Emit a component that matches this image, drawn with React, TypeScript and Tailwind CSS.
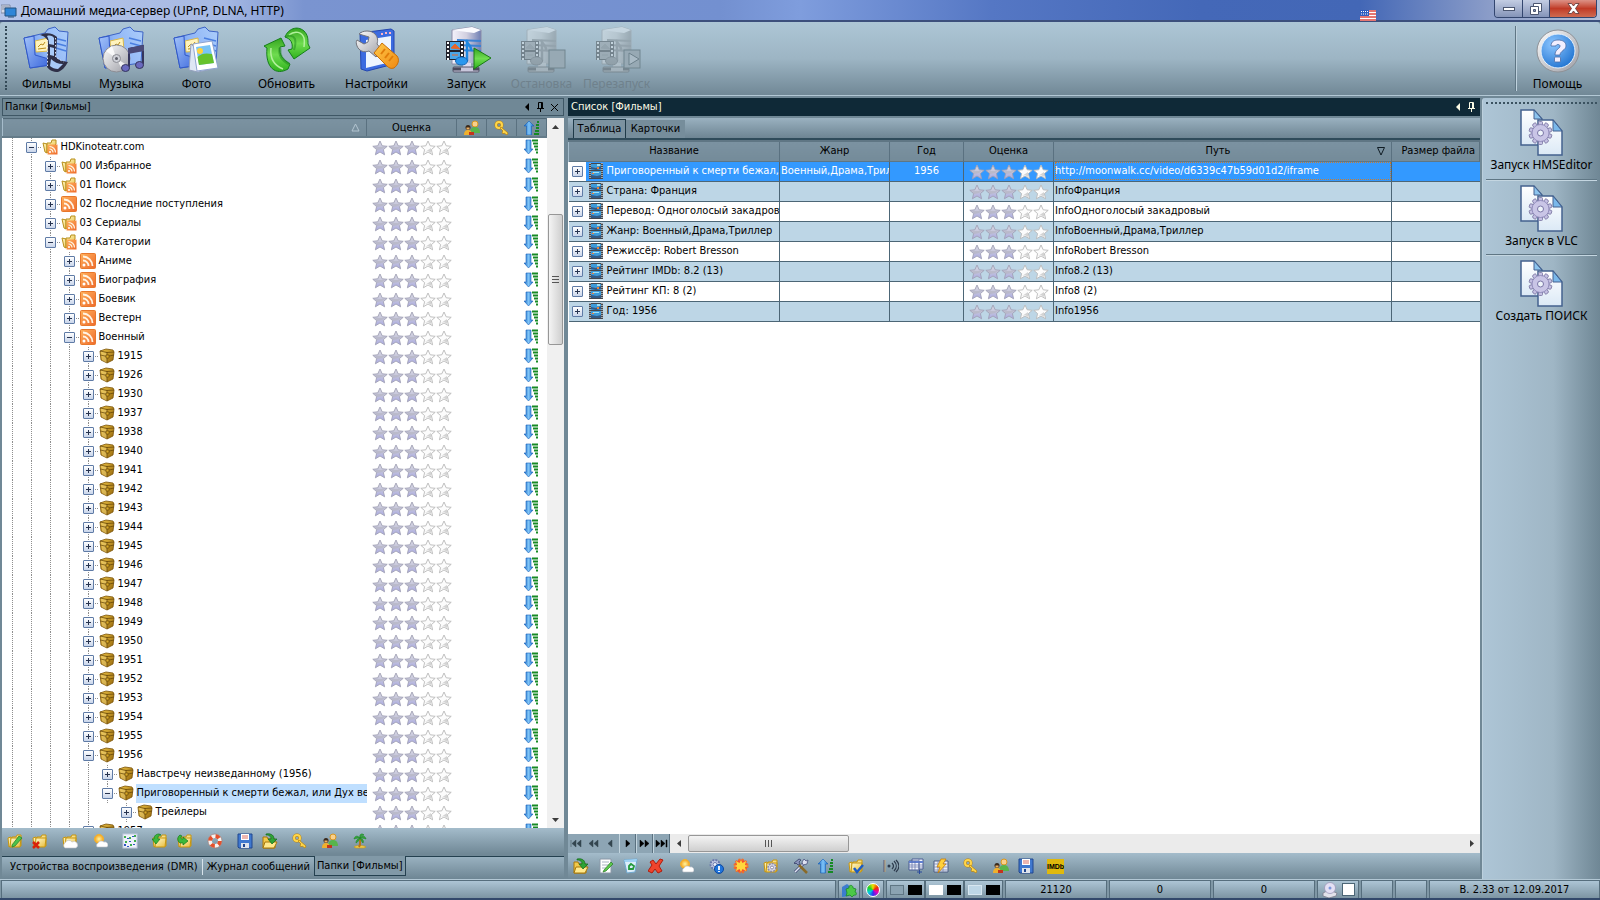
import type { ReactNode } from "react";

const uiFont = "font-['DejaVu_Sans_Condensed','Liberation_Sans',sans-serif]";
const captionFont = "font-['Noto_Sans','Open_Sans',sans-serif]";

/* ---------- shared gradients ---------- */

function Gradients() {
  return (
    <svg width="0" height="0" className="absolute" aria-hidden="true">
      <defs>
        <linearGradient id="folderBody" x1="0" y1="0.6" x2="1" y2="0.2">
          <stop offset="0" stopColor="#4f7fe6" />
          <stop offset="0.4" stopColor="#8fb5f6" />
          <stop offset="1" stopColor="#a9cbfa" />
        </linearGradient>
        <linearGradient id="folderFlap" x1="0" y1="0" x2="1" y2="1">
          <stop offset="0" stopColor="#a4c4fa" />
          <stop offset="1" stopColor="#3a66dc" />
        </linearGradient>
        <linearGradient id="green" x1="0" y1="0" x2="0" y2="1">
          <stop offset="0" stopColor="#35a51f" />
          <stop offset="0.5" stopColor="#6fdc50" />
          <stop offset="1" stopColor="#2fb21c" />
        </linearGradient>
        <linearGradient id="steel" x1="0" y1="0" x2="1" y2="1">
          <stop offset="0" stopColor="#ffffff" />
          <stop offset="1" stopColor="#9a9ba3" />
        </linearGradient>
        <linearGradient id="orange" x1="0" y1="0" x2="1" y2="1">
          <stop offset="0" stopColor="#ffc94a" />
          <stop offset="1" stopColor="#f08a12" />
        </linearGradient>
        <linearGradient id="rss" x1="0" y1="0" x2="1" y2="1">
          <stop offset="0" stopColor="#ffb25c" />
          <stop offset="1" stopColor="#ee6a2c" />
        </linearGradient>
        <linearGradient id="yellow" x1="0" y1="0" x2="1" y2="1">
          <stop offset="0" stopColor="#fffbd0" />
          <stop offset="1" stopColor="#e8bc3a" />
        </linearGradient>
        <linearGradient id="box" x1="0" y1="0" x2="1" y2="1">
          <stop offset="0" stopColor="#ecc142" />
          <stop offset="1" stopColor="#94660a" />
        </linearGradient>
        <linearGradient id="starOn" x1="0" y1="0" x2="0" y2="1">
          <stop offset="0" stopColor="#dcdce6" />
          <stop offset="0.5" stopColor="#c4c4da" />
          <stop offset="1" stopColor="#a9a9e6" />
        </linearGradient>
        <linearGradient id="blueArrow" x1="0" y1="0" x2="1" y2="0">
          <stop offset="0" stopColor="#1767c4" />
          <stop offset="0.5" stopColor="#7fc4f7" />
          <stop offset="1" stopColor="#1a6fce" />
        </linearGradient>
        <linearGradient id="page" x1="0" y1="0" x2="0" y2="1">
          <stop offset="0" stopColor="#ffffff" />
          <stop offset="1" stopColor="#dbe9f6" />
        </linearGradient>
        <linearGradient id="server" x1="0" y1="0" x2="1" y2="0">
          <stop offset="0" stopColor="#f4f2fb" />
          <stop offset="0.5" stopColor="#d2d0e0" />
          <stop offset="1" stopColor="#6f7fb4" />
        </linearGradient>
        <radialGradient id="help" cx="0.35" cy="0.3" r="0.8">
          <stop offset="0" stopColor="#8cc6ff" />
          <stop offset="1" stopColor="#1c70cf" />
        </radialGradient>
        <radialGradient id="sun">
          <stop offset="0" stopColor="#fff6a0" />
          <stop offset="1" stopColor="#f5a01a" />
        </radialGradient>
      </defs>
    </svg>
  );
}

/* ---------- large toolbar icons ---------- */

function Large({ children }: { children: ReactNode }) {
  return (
    <svg viewBox="0 0 48 48" className="size-12 shrink-0" aria-hidden="true">
      {children}
    </svg>
  );
}

function BlueFolder() {
  return (
    <>
      <path d="M1 12l21-5 3-4 7-2 4 4 9 1-2 31-36 5z" fill="url(#folderBody)" stroke="#3d63c4" strokeLinejoin="round" />
      <path d="M31 12l12 3M32 17l11 3M33 22l10 3" stroke="#4a7fe0" strokeWidth="1.5" />
      <path d="M12 15l13-3 1 13-13 1z" fill="#fff3bd" stroke="#d9b84b" />
      <path d="M15 21l3-3 2 1 2-3M15 23l8-1" stroke="#b98d1c" fill="none" />
      <path d="M1 12l10-2 1 19 14 4v6L7 42z" fill="url(#folderFlap)" stroke="#3158c8" strokeLinejoin="round" />
    </>
  );
}

function FilmsIcon() {
  return (
    <Large>
      <BlueFolder />
      <path d="M17 9c6-3 13-2 17 2l-1 20c3 4 7 4 12 5-3 5-5 8-10 10-5 0-9-2-11-5l1-25c-1-4-4-6-8-7z" fill="#2f3048" />
      <path d="M24 10c3-1 6 0 7 2v7l-5-1c0-4-1-6-2-8zM27 21l4 1v8l-4-1zM28 33c3 3 7 5 12 5l-5 5c-3 0-6-1-8-3z" fill="#a9caf8" />
      <path d="M24.500 14v27M32.500 12v19l8 5" stroke="#e8eefc" strokeWidth="0.900" strokeDasharray="1.500 2" fill="none" />
    </Large>
  );
}

function MusicIcon() {
  return (
    <Large>
      <BlueFolder />
      <circle cx="18.500" cy="32.500" r="13.500" fill="url(#steel)" stroke="#8c8d94" />
      <path d="M18.500 32.500L8 25l6-5zM18.500 32.500l11 7-5 5z" fill="#fff" opacity="0.8" />
      <circle cx="18.500" cy="32.500" r="4" fill="#cfd1d8" stroke="#8c8d94" />
      <circle cx="18.500" cy="32.500" r="1.500" fill="#5e606a" />
      <path d="M31 41V23l14-3v18" stroke="#35355c" strokeWidth="2" fill="none" />
      <path d="M30 22l16-3v6l-16 3z" fill="#4a4a78" />
      <ellipse cx="27.500" cy="42" rx="4" ry="3.500" fill="#6a6abf" stroke="#34345c" />
      <ellipse cx="41.500" cy="39" rx="4" ry="3.500" fill="#6a6abf" stroke="#34345c" />
    </Large>
  );
}

function PhotoIcon() {
  return (
    <Large>
      <BlueFolder />
      <path d="M18 18l-2 26 9 2 20-4z" fill="#dfe7f4" stroke="#93a0bd" />
      <path d="M20 18l19-3 6 27-21 3z" fill="#fff" stroke="#8ea4cf" strokeLinejoin="round" />
      <path d="M23 21l14-2 4 18-15 2z" fill="#79c4f5" />
      <path d="M24.500 31c4-4 9-4 14.500-3l2 9-15 2z" fill="#66c22c" />
      <circle cx="27" cy="25" r="3" fill="#ffd23a" />
    </Large>
  );
}

function RefreshIcon() {
  return (
    <Large>
      <path d="M1 20l17-8 4 8-5 1c-1 8 2 12 10 17l-2 5C13 50 2 42 4 22z" fill="url(#green)" stroke="#15801a" strokeLinejoin="round" />
      <path d="M8 22c-1 9 2 17 12 21" stroke="#b2f19c" strokeWidth="1.500" fill="none" />
      <path d="M17 22c-1 8 2 12 9 16" stroke="#1d8a1c" strokeWidth="3" fill="none" opacity="0.5" />
      <path d="M22 11C25 3 34-1 41 5c4 4 4 8 4 13l2 4-16 11-6-9 4-1c1-6-1-10-7-12z" fill="url(#green)" stroke="#15801a" strokeLinejoin="round" />
      <path d="M26 9c6-5 13-3 15 3 1 4 0 7 0 9" stroke="#b2f19c" strokeWidth="1.500" fill="none" />
      <path d="M22 11c4-2 8-2 10 2 1 4 0 8-1 11" stroke="#1d8a1c" strokeWidth="2" fill="none" opacity="0.5" />
    </Large>
  );
}

function SettingsIcon() {
  return (
    <Large>
      <path d="M7 7l31-4 3 2v33l-27 7-6-2z" fill="#3c6be0" stroke="#2447b0" />
      <path d="M13 14l25-4v26l-25 6z" fill="#eef5ff" />
      <path d="M28 8h2M32 7h2M36 7h2" stroke="#ffb4c4" strokeWidth="2" />
      <path
        d="M6 8c4-4 12-4 16 0 3 3 3 7 2 10l5 6-6 7-7-6c-5 2-10 0-12-5-1-3-1-4 0-6l7 4 4-2 1-5z"
        fill="url(#steel)"
        stroke="#73747c"
      />
      <path d="M21 27l8-10 15 13c3 4 1 9-3 12-3 1-5 0-7-2z" fill="url(#orange)" stroke="#c86e08" strokeLinejoin="round" />
      <path d="M28 28l4-5M32 32l4-5M36 35l4-5" stroke="#e07c0a" strokeWidth="2" />
    </Large>
  );
}

function ServerBody() {
  return (
    <>
      <path d="M9 4l20-3 9 3v34H9z" fill="url(#server)" stroke="#8c8ca8" />
      <path d="M9 4l20-3 9 3-7 3z" fill="#fafafe" />
      <path d="M14 14l24 1M14 19l24 1M14 24l24 1" stroke="#3c82d4" strokeWidth="2" />
      <path d="M20 37h8v4h-8z" fill="#dcdaf0" />
      <rect x="10" y="41" width="26" height="5" rx="1" fill="#c9c7dc" stroke="#55556a" />
      <path d="M10 43h8M30 43h6" stroke="#4a4a5c" strokeWidth="3" />
      <rect x="3" y="15" width="18" height="19" fill="#22222c" />
      <path d="M5 16v18M19 16v18" stroke="#fff" strokeWidth="2" strokeDasharray="2 2" />
      <path d="M7 16h10v8H7zM7 26h10v7H7z" fill="#4aa6e8" />
      <path d="M8 22l4-4 5 5zM9 29h6" fill="#e4662c" stroke="#e4662c" />
      <path d="M23 14c2 5 6 6 5 11M24 14v21" stroke="#1e86e0" strokeWidth="2.500" fill="none" />
      <ellipse cx="18.500" cy="35" rx="6" ry="4" fill="#2b97ee" stroke="#1668b8" />
    </>
  );
}

function StartIcon() {
  return (
    <Large>
      <ServerBody />
      <path d="M31 22l17 10-17 11z" fill="url(#green)" stroke="#1a7a16" strokeLinejoin="round" />
    </Large>
  );
}

function StopIcon() {
  return (
    <Large>
      <g opacity="0.35" className="grayscale">
        <ServerBody />
      </g>
      <rect x="31" y="24" width="16" height="18" fill="#97a9b4" stroke="#71858f" />
    </Large>
  );
}

function RestartIcon() {
  return (
    <Large>
      <g opacity="0.35" className="grayscale">
        <ServerBody />
      </g>
      <rect x="31" y="24" width="16" height="18" fill="#97a9b4" stroke="#71858f" />
      <path d="M36 27l10 6-10 6z" fill="#a9bac5" stroke="#6d818c" />
    </Large>
  );
}

function HelpIcon() {
  return (
    <Large>
      <circle cx="24" cy="25" r="21" fill="url(#steel)" stroke="#8e9196" />
      <circle cx="24" cy="25" r="17" fill="url(#help)" stroke="#e8f2fc" />
      <path
        d="M17 20c0-5 4-6 7-6 5 0 8 2 8 6s-6 5-6 9h-5c0-6 5-6 5-9 0-2-4-2-4 0z"
        fill="#f2efff"
        stroke="#4a6ba4"
        strokeWidth="0.800"
      />
      <rect x="20.500" y="31" width="6" height="5" rx="1" fill="#f2efff" stroke="#4a6ba4" strokeWidth="0.800" />
    </Large>
  );
}

const gearTeeth = [0, 36, 72, 108, 144, 180, 216, 252, 288, 324];

function ScriptIcon() {
  return (
    <Large>
      <path d="M3 2h13l8 9v26H3z" fill="url(#page)" stroke="#44618f" strokeWidth="1.5" />
      <path d="M16 2v9h8z" fill="#8cc4ee" stroke="#44618f" />
      <path d="M20 12h15l9 11v24H20z" fill="url(#page)" stroke="#44618f" strokeWidth="1.500" />
      <path d="M35 12v11h9z" fill="#7ab8ea" stroke="#44618f" />
      {gearTeeth.map((angle) => (
        <rect key={angle} x="20.500" y="13.500" width="4" height="5" rx="1" fill="#c4c0e2" stroke="#77729f" strokeWidth="0.800" transform={`rotate(${angle} 22.500 25)`} />
      ))}
      <circle cx="22.500" cy="25" r="8.500" fill="#c9c5e6" stroke="#8782b4" strokeWidth="0.800" />
      <circle cx="22.500" cy="25" r="3" fill="#eef4fa" stroke="#7a75a6" />
    </Large>
  );
}

/* ---------- 16px icons ---------- */

function Small({ children }: { children: ReactNode }) {
  return (
    <svg viewBox="0 0 16 16" className="size-4 shrink-0" aria-hidden="true">
      {children}
    </svg>
  );
}

function YellowFolder() {
  return (
    <>
      <path d="M1 5l3-1v9l-2 1zM5 4h4l1-2h4v11H5z" fill="url(#yellow)" stroke="#c8960f" />
      <path d="M4 5h10l-1 9H3z" fill="url(#yellow)" stroke="#c8960f" />
    </>
  );
}

const smallIcons: Record<string, ReactNode> = {
  editFolder: (
    <>
      <YellowFolder />
      <path d="M5 12l7-9 3 2-7 8-3 1z" fill="#4cc24c" stroke="#1f7a24" strokeWidth="0.700" />
    </>
  ),
  deleteFolder: (
    <>
      <YellowFolder />
      <path d="M1 9l6 6M7 9l-6 6" stroke="#d8220c" strokeWidth="2.500" />
    </>
  ),
  cloudFolder: (
    <>
      <YellowFolder />
      <path d="M3 15a3 3 0 010-5 4 4 0 017-1 3 3 0 014 6z" fill="#fff" stroke="#b9bcc4" strokeWidth="0.600" />
    </>
  ),
  sunCloud: (
    <>
      <circle cx="7" cy="6" r="4.500" fill="url(#sun)" stroke="#f2b22c" />
      <path d="M5 14a3 3 0 011-4 4 4 0 016-1 3 3 0 013 5z" fill="#fff" stroke="#b9bcc4" strokeWidth="0.600" />
    </>
  ),
  grid: (
    <>
      <rect x="1" y="1" width="14" height="14" fill="#eef2fa" stroke="#c3cbe0" />
      <path d="M2 3h2v2H2zM7 4h2v2H7zM12 2h2v2h-2zM3 8h2v2H3zM8 11h2v2H8zM12 7h2v2h-2z" fill="#3fae4c" />
      <path d="M5 5h2v1H5zM10 3h2v1h-2zM2 11h2v2H2zM7 8h2v1H7zM11 11h2v1h-2zM5 13h2v1H5z" fill="#2f55c4" />
    </>
  ),
  folderBackward: (
    <>
      <YellowFolder />
      <path d="M7 1C3 1 2 4 2 6H0l4 5 4-5H6c0-2 0-4 3-4z" fill="#3cb83a" stroke="#137a1b" strokeWidth="0.700" />
    </>
  ),
  folderForward: (
    <>
      <YellowFolder />
      <path d="M3 2C0 4 0 8 3 10h3v2l5-4-5-4v2C4 6 3 5 5 3z" fill="#3cb83a" stroke="#137a1b" strokeWidth="0.700" />
    </>
  ),
  lifebuoy: (
    <>
      <circle cx="8" cy="8" r="5" fill="none" stroke="#f6f2f0" strokeWidth="4" />
      <circle cx="8" cy="8" r="5" fill="none" stroke="#e5502c" strokeWidth="4" strokeDasharray="4 3.850" />
      <circle cx="8" cy="8" r="7" fill="none" stroke="#a87468" strokeWidth="0.600" />
    </>
  ),
  save: (
    <>
      <path d="M1 1h14v14H2l-1-1z" fill="#3f78cf" stroke="#20468f" />
      <path d="M4 1h8v6H4z" fill="#fff" />
      <path d="M5 3h6M5 5h6" stroke="#d24a3a" strokeWidth="0.800" />
      <path d="M4 10h8v5H4z" fill="#dfe4ec" />
      <path d="M6 11h2v3H6z" fill="#20468f" />
    </>
  ),
  openFolder: (
    <>
      <path d="M1 4h4l1 2h7v9H1z" fill="#f2c84a" stroke="#a8780a" />
      <path d="M3 9h12l-3 6H1z" fill="#ffe98c" stroke="#a8780a" />
      <path d="M4 1c6-1 8 2 8 5h3l-5 5-4-5h3c0-2-1-4-5-4z" fill="#2fa336" stroke="#136a1b" strokeWidth="0.700" />
    </>
  ),
  key: (
    <>
      <circle cx="5" cy="5" r="3" fill="none" stroke="#b8800a" strokeWidth="3" />
      <circle cx="5" cy="5" r="3" fill="none" stroke="#ffd64a" strokeWidth="2" />
      <path d="M7 7l7 6-1 2-3-2-1 1-1-2 1-1-3-3z" fill="#ffd64a" stroke="#b8800a" strokeWidth="0.700" />
    </>
  ),
  people: (
    <>
      <circle cx="11" cy="4" r="3" fill="#f8d08c" stroke="#d9961e" />
      <path d="M6 13c0-4 2-6 5-6s5 2 5 6z" fill="#58b44c" />
      <circle cx="4" cy="7.500" r="2.500" fill="#3a2a1c" />
      <path d="M2.500 7.500h3v2h-3z" fill="#f0b060" />
      <path d="M0 15c0-4 2-5 4-5s4 1 4 5z" fill="#f0b02c" />
      <path d="M5 12h5v3H5z" fill="#c4341c" />
    </>
  ),
  palm: (
    <>
      <path d="M2 14c2-2 10-2 12 0l-2 1H4z" fill="#f0cb4c" stroke="#c8960f" strokeWidth="0.600" />
      <path d="M7 14c2-3 1-6 1-9" stroke="#b5741c" strokeWidth="2" fill="none" />
      <path d="M8 5C5 2 3 3 2 6c2-1 4-1 6-1M8 5c3-3 5-2 6 1-2-1-4-1-6-1M8 5C7 1 10 0 12 2 10 2 9 3 8 5M8 5c-3 1-4 3-4 5 2-1 3-3 4-5M8 5c3 1 4 3 3 5-1-1-2-3-3-5" fill="#35a83a" stroke="#1f8a2a" strokeWidth="0.700" />
    </>
  ),
  editPage: (
    <>
      <path d="M2 1h11v14H2z" fill="#fff" stroke="#8b98a8" />
      <path d="M4 4h7M4 7h7M4 10h4" stroke="#a9b4c2" />
      <path d="M6 12l7-8 2 2-7 7-3 1z" fill="#5cc84c" stroke="#287a24" strokeWidth="0.700" />
    </>
  ),
  recycle: (
    <>
      <path d="M1 2l13-1-2 13-8 1z" fill="#dceefa" stroke="#6fa8d0" />
      <path d="M1 2l13-1-1 3H2z" fill="#9fd2f4" />
      <path d="M6 8l2-2 3 2-1 3H6z" fill="none" stroke="#249a3c" strokeWidth="1.800" />
    </>
  ),
  remove: <path d="M2 4l3-2 3 4 4-5 3 1-4 6 3 5-4 2-3-4-3 4-4-2 4-6z" fill="#f0442c" stroke="#b01c0c" />,
  gearInfo: (
    <>
      <circle cx="7" cy="6.500" r="4.500" fill="#c6cde6" stroke="#6a78ac" strokeWidth="2" strokeDasharray="2 1" />
      <circle cx="7" cy="6.500" r="2" fill="#eef2fa" stroke="#6a78ac" />
      <circle cx="11" cy="11" r="4.500" fill="#1f74dc" stroke="#0f4aa0" />
      <path d="M11 8v4M11 13v1" stroke="#fff" strokeWidth="1.800" />
    </>
  ),
  sun: (
    <>
      <circle cx="8" cy="8" r="6.500" fill="#f4502c" stroke="#f0702c" strokeWidth="2" strokeDasharray="2 1.400" />
      <path d="M8 2l1.500 3L13 3l-1 4 3 1-3 1 1 4-3.500-2L8 14l-1.500-3L3 13l1-4-3-1 3-1-1-4 3.500 2z" fill="#ffd83c" />
    </>
  ),
  folderGear: (
    <>
      <YellowFolder />
      <circle cx="9" cy="9.500" r="4" fill="#d6d6e6" stroke="#8a8aa4" strokeWidth="1.500" strokeDasharray="2 1" />
      <circle cx="9" cy="9.500" r="1.500" fill="#fff" stroke="#8a8aa4" />
    </>
  ),
  tools: (
    <>
      <path d="M2 14L13 3" stroke="#4a527c" strokeWidth="3" />
      <path d="M2 14L13 3" stroke="#dfe3f2" strokeWidth="1.500" />
      <path d="M11 1l2 2 2-1-1 4-4 1-1-3z" fill="#dfe3f2" stroke="#4a527c" strokeWidth="0.800" />
      <path d="M6 7l8 8" stroke="#8a6a28" strokeWidth="2.500" />
      <path d="M1 5l5-4 2 1-2 2 1 2-2 1-2-2-1 1z" fill="#8a94bc" stroke="#39416a" strokeWidth="0.800" />
    </>
  ),
  folderCheck: (
    <>
      <YellowFolder />
      <path d="M6 10l3 4 6-7" stroke="#1c5cc4" strokeWidth="2.500" fill="none" />
    </>
  ),
  sound: (
    <>
      <path d="M1 2v12" stroke="#557" />
      <path d="M2 2v12" stroke="#d8a860" strokeWidth="0.700" />
      <circle cx="6" cy="8" r="1.500" fill="#2c3a4c" />
      <path d="M9 5c2 2 2 4 0 6M11 3c3 3 3 7 0 10M13 2c4 4 4 8 0 12" stroke="#2c3a4c" fill="none" strokeWidth="1.200" />
    </>
  ),
  tablePlus: (
    <>
      <path d="M4 1h11v10H4z" fill="#f4f6fc" stroke="#4a5c94" />
      <path d="M1 3h10v9H1z" fill="#f4f6fc" stroke="#4a5c94" />
      <path d="M1 4h14" stroke="#5f7fd0" strokeWidth="2" />
      <path d="M4 3v9M7 3v9M1 7h14M1 9h14M11 1v10" stroke="#5f70a8" strokeWidth="0.700" />
      <path d="M9 14h5M11.500 12v4" stroke="#2a4a9c" />
    </>
  ),
  tableBolt: (
    <>
      <path d="M1 3h14v11H1z" fill="#e9edf8" stroke="#4a5c84" />
      <path d="M1 6h14M1 9h14M1 12h14M5 3v11M10 3v11" stroke="#7c88ac" strokeWidth="0.800" />
      <path d="M8 1h5l-3 5h3l-8 9 2-6H4z" fill="#ffd23c" stroke="#c87c0c" strokeWidth="0.800" />
    </>
  ),
  sortUp: (
    <>
      <path d="M5 1l5 5H7.500v9h-5V6H0z" fill="url(#blueArrow)" stroke="#1560b8" strokeWidth="0.600" />
      <path d="M13 2h2M12 5h3M12 8h3M11 11h4M10 14h5" stroke="#168a24" strokeWidth="2" />
    </>
  ),
  sortDown: (
    <>
      <path d="M2 1h5v9h2l-4.500 5L0 10h2z" fill="url(#blueArrow)" stroke="#1560b8" strokeWidth="0.600" />
      <path d="M8 1.500h6M9 4.500h5M10 7.500h4M11 10.500h3M12 13.500h2" stroke="#168a24" strokeWidth="1.800" />
    </>
  ),
  rss: (
    <>
      <rect x="0.500" y="0.500" width="15" height="15" rx="1" fill="url(#rss)" stroke="#e8782c" />
      <circle cx="4" cy="12" r="1.500" fill="#fff" />
      <path d="M3 7.500a5.500 5.500 0 015.500 5.500M3 3.500a9.500 9.500 0 019.500 9.500" stroke="#fff4e4" strokeWidth="1.800" fill="none" />
    </>
  ),
  rssFolder: (
    <>
      <path d="M1 4l4 1v9l-2-1zM5 4h4l1-3h4v4l-9 9z" fill="url(#yellow)" stroke="#b8901c" />
      <rect x="5.500" y="5.500" width="10" height="10" fill="url(#rss)" />
      <circle cx="8" cy="13" r="1" fill="#fff" />
      <path d="M7.500 10a3.500 3.500 0 013.500 3.500M7.500 7.500a6 6 0 016 6" stroke="#fff4e4" strokeWidth="1.200" fill="none" />
    </>
  ),
  chest: (
    <>
      <path d="M1 3l6-2 7 1 1 2-1 8-6 3-6-3z" fill="url(#box)" stroke="#7a5206" strokeWidth="0.800" strokeLinejoin="round" />
      <path d="M2 3l6 2v10l-5-3z" fill="#fbe08a" opacity="0.450" />
      <path d="M1.500 7l6.500 1.500L15 7M8 4v11M1 3l7 1.500L15 4" stroke="#5c3d04" strokeWidth="0.700" fill="none" />
      <path d="M7 7h3v3H7z" fill="#d9a928" stroke="#5c3d04" strokeWidth="0.600" />
    </>
  ),
  film: (
    <>
      <path d="M1 0h14v16H1z" fill="#44484e" />
      <path d="M2 0v16M14 0v16" stroke="#fff" strokeWidth="1" strokeDasharray="1 1" />
      <path d="M3 1h10v6H3zM3 8h10v7H3z" fill="#3f9bd8" />
      <path d="M3 4l5 1 5-2v3l-5 1-5-1zM3 12l6 1 4-1v3H3z" fill="#315a86" />
      <path d="M9 1h3v2H9zM5 9h6v1H5z" fill="#9fe0f4" />
      <path d="M9 4h2v2H9zM4 10h2v1H4z" fill="#e8823c" />
    </>
  ),
  puzzle: (
    <>
      <path d="M1 5l5-3 4 3-2 9-7 1z" fill="#3c7cd0" />
      <path d="M5 7l3-1c-1-3 4-4 4 0l3 1-1 3c2 0 2 4-1 3l-2 2-2-2-4 1 1-3z" fill="#4cc848" stroke="#1b8a2a" strokeWidth="0.800" />
    </>
  ),
  disc: (
    <>
      <path d="M1 11l6-3 8 3-1 3-7 2-6-2z" fill="#e2e2ea" stroke="#7c7c8c" strokeWidth="0.800" />
      <circle cx="8" cy="6" r="5.500" fill="#e4e0f4" stroke="#9c98b8" strokeWidth="0.800" />
      <circle cx="8" cy="6" r="1.500" fill="#7d96dc" />
    </>
  ),
};

function Icon({ name }: { name: string }) {
  return <Small>{smallIcons[name]}</Small>;
}

const STAR = "M8 1l2.200 4.800 5 .5-3.800 3.300 1.200 5.200L8 12l-4.600 2.800 1.200-5.200L.8 6.300l5-.5z";

function Stars({ label = "3 из 5" }: { label?: string }) {
  return (
    <span className="flex pl-[5px]" role="img" aria-label={label}>
      {[0, 1, 2, 3, 4].map((i) => (
        <svg key={i} viewBox="0 0 16 16" className="mt-px size-4">
          <path d={STAR} fill={i < 3 ? "url(#starOn)" : "#fcfcfc"} stroke={i < 3 ? "#a0a0b4" : "#b9b9b9"} strokeWidth="0.900" strokeLinejoin="round" />
          {i < 3 ? (
            <path d="M3 7h10l-3 2-5 1z" fill="#b4b4c0" opacity="0.6" />
          ) : (
            <path d="M11 8l-6 4 3-1 3 2z" fill="#d4d4d4" />
          )}
        </svg>
      ))}
    </span>
  );
}

/* ---------- data ---------- */

type Node = { level: number; text: string; icon: string; open?: boolean; selected?: boolean };

const years = [
  "1915", "1926", "1930", "1937", "1938", "1940", "1941", "1942", "1943", "1944", "1945",
  "1946", "1947", "1948", "1949", "1950", "1951", "1952", "1953", "1954", "1955",
];

const nodes: Node[] = [
  { level: 1, text: "HDKinoteatr.com", icon: "rssFolder", open: true },
  { level: 2, text: "00 Избранное", icon: "rssFolder" },
  { level: 2, text: "01 Поиск", icon: "rssFolder" },
  { level: 2, text: "02 Последние поступления", icon: "rss" },
  { level: 2, text: "03 Сериалы", icon: "rssFolder" },
  { level: 2, text: "04 Категории", icon: "rssFolder", open: true },
  { level: 3, text: "Аниме", icon: "rss" },
  { level: 3, text: "Биография", icon: "rss" },
  { level: 3, text: "Боевик", icon: "rss" },
  { level: 3, text: "Вестерн", icon: "rss" },
  { level: 3, text: "Военный", icon: "rss", open: true },
  ...years.map((text) => ({ level: 4, text, icon: "chest" })),
  { level: 4, text: "1956", icon: "chest", open: true },
  { level: 5, text: "Навстречу неизведанному (1956)", icon: "chest" },
  { level: 5, text: "Приговоренный к смерти бежал, или Дух вее", icon: "chest", open: true, selected: true },
  { level: 6, text: "Трейлеры", icon: "chest" },
  { level: 4, text: "1957", icon: "chest" },
];

const rows = [
  { name: "Приговоренный к смерти бежал,", genre: "Военный,Драма,Трил", year: "1956", path: "http://moonwalk.cc/video/d6339c47b59d01d2/iframe" },
  { name: "Страна: Франция", path: "InfoФранция" },
  { name: "Перевод: Одноголосый закадров", path: "InfoОдноголосый закадровый" },
  { name: "Жанр: Военный,Драма,Триллер", path: "InfoВоенный,Драма,Триллер" },
  { name: "Режиссёр: Robert Bresson", path: "InfoRobert Bresson" },
  { name: "Рейтинг IMDb: 8.2 (13)", path: "Info8.2 (13)" },
  { name: "Рейтинг КП: 8 (2)", path: "Info8 (2)" },
  { name: "Год: 1956", path: "Info1956" },
];

const leftTools = [
  [["editFolder", "Изменить"], ["deleteFolder", "Удалить"]],
  [["cloudFolder", "Подкасты"]],
  [["sunCloud", "Погода"]],
  [["grid", "Сетка"]],
  [["folderBackward", "Назад"], ["folderForward", "Вперёд"]],
  [["lifebuoy", "Помощь"]],
  [["save", "Сохранить"], ["openFolder", "Загрузить"]],
  [["key", "Доступ"]],
  [["people", "Пользователи"]],
  [["palm", "Отдых"]],
];

const rightTools = [
  [["openFolder", "Открыть"], ["editPage", "Изменить"], ["recycle", "Корзина"], ["remove", "Удалить"]],
  [["sunCloud", "Погода"]],
  [["gearInfo", "Свойства"], ["sun", "Обработать"]],
  [["folderGear", "Папка"]],
  [["tools", "Инструменты"], ["sortUp", "Сортировка"]],
  [["folderCheck", "Отметить"]],
  [],
  [["sound", "Звук"], ["tablePlus", "Таблица"], ["tableBolt", "Обновить таблицу"]],
  [["key", "Доступ"]],
  [["people", "Пользователи"], ["save", "Сохранить"]],
];

/* ---------- building blocks ---------- */

function Expander({ open }: { open?: boolean }) {
  return (
    <button
      type="button"
      aria-label={open ? "Свернуть" : "Развернуть"}
      className="relative block size-[11px] rounded-[1px] border border-[#5f7ba6] bg-linear-to-b from-white to-[#c9d5ea]"
    >
      <span className="absolute top-1 left-[2px] h-px w-[5px] bg-[#26334f]" />
      {!open && <span className="absolute top-[2px] left-1 h-[5px] w-px bg-[#26334f]" />}
    </button>
  );
}

function Guide({ children, stub }: { children?: ReactNode; stub?: boolean }) {
  return (
    <span className="relative flex h-full w-[19px] shrink-0 items-center justify-center">
      <span className="absolute inset-y-0 left-[9px] border-l border-dotted border-[#8f8f8f]" />
      {stub && <span className="absolute top-[9px] right-0 w-[9px] border-t border-dotted border-[#8f8f8f]" />}
      {children}
    </span>
  );
}

function ToolStrip({ groups, children }: { groups: string[][][]; children?: ReactNode }) {
  return (
    <div className="flex h-[26px] shrink-0 items-center gap-[5px] bg-linear-to-b from-[#a4bccb] to-[#708896]">
      {groups.map((group, i) => (
        <div key={i} className="flex">
          {group.map(([icon, label]) => (
            <button key={icon} type="button" aria-label={label} className="flex h-6 w-[25px] items-center justify-center">
              <Icon name={icon} />
            </button>
          ))}
        </div>
      ))}
      {children}
    </div>
  );
}

function BigButton({ icon, label, disabled }: { icon: ReactNode; label: string; disabled?: boolean }) {
  return (
    <button type="button" disabled={disabled} className="flex w-[75px] flex-col items-center text-black disabled:text-[#6f818c]">
      {icon}
      <span className={`text-[12px] leading-5 whitespace-nowrap ${captionFont}`}>{label}</span>
    </button>
  );
}

function PaneGlyphs({ close }: { close?: boolean }) {
  return (
    <span className="ml-auto flex items-center gap-[5px] pr-1">
      <button type="button" aria-label="Влево">
        <svg width="8" height="10" viewBox="0 0 8 10"><path d="M6 1v8L2 5z" fill="currentColor" /></svg>
      </button>
      <button type="button" aria-label="Закрепить">
        <svg width="9" height="10" viewBox="0 0 9 10" fill="none" stroke="currentColor">
          <path d="M2.500 .5h4v6M2.500 .5v6M5.500 1v5M1 6.500h7M4.500 7v3" />
        </svg>
      </button>
      {close && (
        <button type="button" aria-label="Закрыть">
          <svg width="9" height="9" viewBox="0 0 9 9" stroke="currentColor"><path d="M1 1l7 7M8 1L1 8" /></svg>
        </button>
      )}
    </span>
  );
}

const headCell =
  "border-l border-l-[#a6bccb] border-r border-r-[#5a7180] bg-linear-to-b from-[#7b92a1] to-[#748b99] p-0 font-normal";

/* ---------- panes ---------- */

function HeadIcon({ name }: { name: string }) {
  return (
    <span className="flex h-[15px] justify-center overflow-hidden">
      <Icon name={name} />
    </span>
  );
}

function TreePane() {
  return (
    <section className="flex w-[562px] shrink-0 flex-col">
      <header className="mb-[2px] flex h-[18px] shrink-0 items-center border border-[#3f5765] bg-[#708896] pl-[2px]">
        <h2>Папки [Фильмы]</h2>
        <PaneGlyphs close />
      </header>
      <div className="flex min-h-0 flex-1 bg-white">
        <div className="min-w-0 flex-1 overflow-hidden">
          <table className="w-full table-fixed border-collapse">
            <colgroup>
              <col />
              <col className="w-[90px]" />
              <col className="w-[30px]" />
              <col className="w-[30px]" />
              <col className="w-[30px]" />
            </colgroup>
            <thead>
              <tr className="h-[18px] border-t border-b-2 border-t-[#4f6674] border-b-[#647b89] leading-[15px]">
                <th className={headCell} aria-label="Название">
                  <svg width="9" height="9" viewBox="0 0 9 9" className="mr-[6px] ml-auto">
                    <path d="M4.500 1l3.500 7H1z" fill="none" stroke="#b3c5d1" />
                  </svg>
                </th>
                <th className={headCell}>Оценка</th>
                <th className={headCell} aria-label="Пользователи"><HeadIcon name="people" /></th>
                <th className={headCell} aria-label="Доступ"><HeadIcon name="key" /></th>
                <th className={headCell} aria-label="Сортировка"><HeadIcon name="sortUp" /></th>
              </tr>
            </thead>
            <tbody>
              {nodes.map((node) => (
                <tr key={node.text} className="h-[19px]">
                  <td className="p-0">
                    <div className="flex h-[19px] items-center overflow-hidden">
                      {Array.from({ length: node.level }, (_, i) => (i === 5 ? <span key={i} className="w-[19px]" /> : <Guide key={i} />))}
                      <Guide stub>
                        <span className="relative"><Expander open={node.open} /></span>
                      </Guide>
                      <span className="flex w-[19px] shrink-0 justify-center"><Icon name={node.icon} /></span>
                      <span
                        className={
                          node.selected
                            ? "h-[19px] min-w-0 flex-1 overflow-hidden bg-[#bfdfff] pl-px leading-[18px] whitespace-nowrap"
                            : "pl-px leading-[18px] whitespace-nowrap"
                        }
                      >
                        {node.text}
                      </span>
                    </div>
                  </td>
                  <td className="p-0"><Stars /></td>
                  <td className="p-0" />
                  <td className="p-0" />
                  <td className="p-0"><span className="flex justify-center"><Icon name="sortDown" /></span></td>
                </tr>
              ))}
            </tbody>
          </table>
        </div>
        <div className="flex w-[17px] shrink-0 flex-col items-center bg-[#f0f0f0]">
          <button type="button" aria-label="Вверх" className="flex h-[17px] items-center">
            <svg width="7" height="4" viewBox="0 0 7 4"><path d="M0 4h7L3.500 0z" fill="#3c3c3c" /></svg>
          </button>
          <div className="mt-[79px] flex h-[131px] w-[15px] flex-col items-center justify-center gap-[2px] rounded-[2px] border border-[#979797] bg-linear-to-r from-[#f4f4f4] to-[#cfcfcf]">
            <span className="h-px w-[7px] bg-[#555]" />
            <span className="h-px w-[7px] bg-[#555]" />
            <span className="h-px w-[7px] bg-[#555]" />
          </div>
          <button type="button" aria-label="Вниз" className="mt-auto flex h-[17px] items-center">
            <svg width="7" height="4" viewBox="0 0 7 4"><path d="M0 0h7L3.500 4z" fill="#3c3c3c" /></svg>
          </button>
        </div>
      </div>
      <ToolStrip groups={leftTools} />
      <nav className="flex h-[25px] shrink-0 items-start bg-linear-to-b from-[#708896] from-8% via-[#9ab2c1] via-10% to-[#6e8694] pt-[2px]">
        <div className="flex h-[20px] items-center border-t border-t-[#24404f]">
          <button type="button" className="h-4 border-r border-r-[#d7e3ea] pr-1 pl-2">Устройства воспроизведения (DMR)</button>
          <button type="button" className="h-4 px-1">Журнал сообщений</button>
        </div>
        <button type="button" className="h-[20px] border border-t-0 border-[#24404f] bg-[#8199a7] px-[2px]">Папки [Фильмы]</button>
        <div className="h-[20px] flex-1 border-t border-t-[#24404f]" />
      </nav>
    </section>
  );
}

function NavButton({ label, path, active }: { label: string; path: string; active?: boolean }) {
  return (
    <button
      type="button"
      aria-label={label}
      disabled={!active}
      className="flex h-full w-[17px] shrink-0 items-center justify-center bg-[#8da5b4] text-[#33454f] enabled:border-l enabled:border-l-[#c3d5df] enabled:border-r enabled:border-r-[#5a7180] enabled:text-black"
    >
      <svg width="13" height="9" viewBox="0 0 13 9" className="shrink-0">
        <path d={path} fill="currentColor" stroke="currentColor" strokeWidth="0.500" />
      </svg>
    </button>
  );
}

function ListPane() {
  return (
    <section className="flex min-w-0 flex-1 flex-col">
      <header className="mb-[2px] flex h-[18px] shrink-0 items-center bg-[#0f2937] pl-[3px] text-[#fbfbe6]">
        <h2>Список [Фильмы]</h2>
        <PaneGlyphs />
      </header>
      <div className="flex h-[22px] shrink-0 items-end border-b-2 border-b-[#2f4b5a] bg-linear-to-b from-[#9ab1c0] to-[#6e8593] pl-[5px]">
        <button type="button" className="h-[19px] w-[53px] border border-b-0 border-[#1f3a48] bg-[#7b92a0]">Таблица</button>
        <button type="button" className="h-[18px] w-[59px] bg-[#768d9b]">Карточки</button>
      </div>
      <div className="min-h-0 flex-1 overflow-hidden bg-white">
        <table className="w-full table-fixed border-collapse">
          <colgroup>
            <col className="w-[211px]" />
            <col className="w-[110px]" />
            <col className="w-[74px]" />
            <col className="w-[90px]" />
            <col />
            <col className="w-[88px]" />
          </colgroup>
          <thead>
            <tr className="h-5 border-t-2 border-b border-[#5f7684]">
              <th className={headCell}>Название</th>
              <th className={headCell}>Жанр</th>
              <th className={headCell}>Год</th>
              <th className={headCell}>Оценка</th>
              <th className={headCell}>
                <span className="flex items-center pl-[5px]">
                  <span className="flex-1">Путь</span>
                  <svg width="8" height="9" viewBox="0 0 8 9" className="mr-[6px]"><path d="M.5 .5h7L4 8z" fill="none" stroke="#101c24" /></svg>
                </span>
              </th>
              <th className={headCell}><span className="block pr-1 text-right">Размер файла</span></th>
            </tr>
          </thead>
          <tbody>
            {rows.map((row, i) => (
              <tr
                key={row.name}
                className={`h-5 border-b border-b-[#4c6676] ${i === 0 ? "bg-[#3399ff] text-white" : i % 2 ? "bg-[#bdd6e6]" : "bg-white"}`}
              >
                <td className="border-r border-r-[#4c6676] p-0">
                  <div className="flex h-[19px] items-center overflow-hidden whitespace-nowrap">
                    <span className={`flex h-full w-[17px] shrink-0 items-center justify-center ${i === 0 ? "bg-white" : ""}`}><Expander /></span>
                    <span className="mx-[2px] flex"><Icon name="film" /></span>
                    <span className="min-w-0 flex-1 overflow-hidden pl-px leading-[18px]">{row.name}</span>
                  </div>
                </td>
                <td className="border-r border-r-[#4c6676] p-0">
                  <div className="overflow-hidden pl-px whitespace-nowrap">{row.genre}</div>
                </td>
                <td className="border-r border-r-[#4c6676] p-0 text-center">{row.year}</td>
                <td className="border-r border-r-[#4c6676] p-0"><Stars /></td>
                <td className={i === 0 ? "border-r border-r-[#4c6676] p-0 outline-1 -outline-offset-2 outline-dotted outline-[#c97b2e]" : "border-r border-r-[#4c6676] p-0"}>
                  <div className="overflow-hidden pl-px leading-[18px] whitespace-nowrap">{row.path}</div>
                </td>
                <td className="p-0" />
              </tr>
            ))}
          </tbody>
        </table>
      </div>
      <div className="flex h-[19px] shrink-0 bg-[#ebebeb]">
        <NavButton label="В начало" path="M1 1v7M6 1v7L2 4.500zM11 1v7L7 4.500z" />
        <NavButton label="Страница назад" path="M6 1v7L2 4.500zM11 1v7L7 4.500z" />
        <NavButton label="Назад" path="M8 1v7L4 4.500z" />
        <NavButton active label="Вперёд" path="M5 1v7l4-3.500z" />
        <NavButton active label="Страница вперёд" path="M2 1v7l4-3.500zM7 1v7l4-3.500z" />
        <NavButton active label="В конец" path="M1 1v7l4-3.500zM6 1v7l4-3.500zM11 1h1v7h-1z" />
        <button type="button" aria-label="Прокрутить влево" className="flex w-[17px] items-center justify-center">
          <svg width="4" height="7" viewBox="0 0 4 7"><path d="M4 0v7L0 3.500z" fill="#3c3c3c" /></svg>
        </button>
        <div className="my-px ml-px flex w-[161px] items-center justify-center gap-[2px] rounded-[2px] border border-[#979797] bg-linear-to-b from-[#f4f4f4] to-[#cfcfcf]">
          <span className="h-[7px] w-px bg-[#555]" />
          <span className="h-[7px] w-px bg-[#555]" />
          <span className="h-[7px] w-px bg-[#555]" />
        </div>
        <button type="button" aria-label="Прокрутить вправо" className="ml-auto flex w-[17px] items-center justify-center">
          <svg width="4" height="7" viewBox="0 0 4 7"><path d="M0 0v7l4-3.500z" fill="#3c3c3c" /></svg>
        </button>
      </div>
      <ToolStrip groups={rightTools}>
        <button type="button" className="ml-1 flex h-[15px] w-[17px] items-center justify-center bg-[#e0b90c] font-['Liberation_Sans',sans-serif] text-[7px] leading-[15px] font-bold">
          IMDb
        </button>
      </ToolStrip>
    </section>
  );
}

function SidePane() {
  const items = ["Запуск HMSEditor", "Запуск в VLC", "Создать ПОИСК"];
  return (
    <aside className="flex w-[118px] shrink-0 flex-col rounded-t-[3px] border-l border-l-[#bcd0dd] bg-linear-to-r from-[#adc5d6] via-[#9fb6c5] via-60% to-[#6f8795] px-[3px] pt-1">
      <div className="mb-1 border-t-2 border-dotted border-[#3b5260]" />
      {items.map((item, i) => (
        <button
          key={item}
          type="button"
          className={`flex flex-col items-center justify-start ${i ? "h-[75px] border-t border-t-[#5f7684] pt-1 shadow-[inset_0_1px_0_#c4d6e1]" : "h-[71px]"}`}
        >
          <ScriptIcon />
          <span className={`text-[12px] leading-[18px] whitespace-nowrap ${captionFont}`}>{item}</span>
        </button>
      ))}
    </aside>
  );
}

/* ---------- frame ---------- */

function TitleBar() {
  return (
    <header className="flex h-[22px] shrink-0 items-start border-b-2 border-b-[#3c4f7c] bg-[linear-gradient(90deg,#b5c5e9_0%,#a6b9e3_14%,#7a94d0_19%,#7390d0_45%,#7f9ddd_50%,#5577c4_62%,#4468b8_75%,#4367b6_85%,#8a9cc8_93%,#b4c0d8_100%)]">
      <svg width="16" height="14" viewBox="0 0 16 14" className="mt-1 ml-px" aria-hidden="true">
        <path d="M0 1h9v8H0z" fill="#d6dae6" stroke="#7f8ba6" />
        <path d="M1 3h7M1 5h7" stroke="#7f8ba6" />
        <path d="M4 4h11v8H4z" fill="#2f86d8" stroke="#24527f" />
        <path d="M7 13h6" stroke="#24527f" />
      </svg>
      <h1 className={`ml-1 text-[12px] leading-[21px] text-black ${captionFont}`}>Домашний медиа-сервер (UPnP, DLNA, HTTP)</h1>
      <svg width="16" height="11" viewBox="0 0 16 11" className="mt-[10px] mr-[118px] ml-auto" aria-label="Английский">
        <path d="M0 0h16v11H0z" fill="#fff" />
        <path d="M0 1h16M0 4h16M0 7h16M0 10h16" stroke="#dc4a44" strokeWidth="1.500" />
        <path d="M0 0h9v6H0z" fill="#2f5fc0" />
        <path d="M1 1.500h7M1 4h7" stroke="#fff" strokeDasharray="1 1" />
      </svg>
      <div className="mr-[3px] flex h-[18px] overflow-hidden rounded-b-[4px] border border-t-0 border-[#33466f]">
        <button type="button" aria-label="Свернуть" className="flex w-7 items-center justify-center border-r border-r-[#33466f] bg-linear-to-b from-[#c3cde3] to-[#8594b8]">
          <span className="h-1 w-3 border border-[#4b5670] bg-white" />
        </button>
        <button type="button" aria-label="Восстановить" className="flex w-[27px] items-center justify-center border-r border-r-[#33466f] bg-linear-to-b from-[#c3cde3] to-[#8594b8]">
          <svg width="12" height="12" viewBox="0 0 12 12" fill="#fff" stroke="#4b5670">
            <path d="M3.500 .5h8v8h-8z" />
            <path d="M.5 3.500h8v8h-8z" />
            <path d="M3.500 6.500h2v2h-2z" fill="#8594b8" />
          </svg>
        </button>
        <button type="button" aria-label="Закрыть" className="flex w-[46px] items-center justify-center bg-linear-to-b from-[#dc9186] via-[#c03a26] to-[#cf6a50]">
          <svg width="13" height="11" viewBox="0 0 13 11">
            <path d="M1 .5h3.500l2 2.500 2-2.500H12L8.500 5.500l3.500 5H8.500l-2-2.500-2 2.500H1l3.500-5z" fill="#fff" stroke="#5a3434" strokeWidth="0.800" />
          </svg>
        </button>
      </div>
    </header>
  );
}

function MainToolbar() {
  return (
    <div className="flex h-[74px] shrink-0 rounded-t-[3px] border-b border-b-[#b3c8d5] bg-linear-to-b from-[#adc6d6] via-[#9db5c4] via-50% to-[#718896] pl-[5px] pt-1">
      <div className="h-[64px] w-1 border-l-2 border-dotted border-[#344a58]" />
      <div className="flex gap-[15px]">
        <div className="flex">
          <BigButton icon={<FilmsIcon />} label="Фильмы" />
          <BigButton icon={<MusicIcon />} label="Музыка" />
          <BigButton icon={<PhotoIcon />} label="Фото" />
        </div>
        <BigButton icon={<RefreshIcon />} label="Обновить" />
        <BigButton icon={<SettingsIcon />} label="Настройки" />
        <div className="flex">
          <BigButton icon={<StartIcon />} label="Запуск" />
          <BigButton icon={<StopIcon />} label="Остановка" disabled />
          <BigButton icon={<RestartIcon />} label="Перезапуск" disabled />
        </div>
      </div>
      <div className="mr-[5px] ml-auto flex h-[65px] border-l border-l-[#5f7684] pl-1 shadow-[inset_1px_0_0_#bfd2de]">
        <BigButton icon={<HelpIcon />} label="Помощь" />
      </div>
    </div>
  );
}

const cell = "flex h-[18px] items-center justify-center border border-[#566e7d] border-b-0 bg-linear-to-b from-[#adc5d5] to-[#7d95a3]";

function Swatches({ fill }: { fill: string }) {
  return (
    <div className={`${cell} w-[39px] gap-1`}>
      <span className={`h-[10px] w-[14px] border ${fill}`} />
      <span className="h-[10px] w-[14px] bg-black" />
    </div>
  );
}

function StatusBar() {
  return (
    <footer className="flex h-[21px] shrink-0 gap-[2px] border-t border-b-2 border-t-[#b3c8d5] border-b-[#33496b] bg-[#7f97a5] pl-px">
      <div className={`${cell} flex-1`} />
      <div className={`${cell} w-[22px]`}><Icon name="puzzle" /></div>
      <div className={`${cell} w-[22px]`}>
        <span className="size-[14px] rounded-full border border-white bg-[conic-gradient(#f0e000,#f03000,#e000c0,#3030f0,#00d0e0,#20d020,#f0e000)]" />
      </div>
      <div className="flex">
        <Swatches fill="border-[#5f7684] bg-[#8ba3b2]" />
        <Swatches fill="border-white bg-white" />
        <Swatches fill="border-[#d7e6f0] bg-[#bdd6e6]" />
      </div>
      <div className={`${cell} w-[102px]`}>21120</div>
      <div className={`${cell} w-[102px]`}>0</div>
      <div className={`${cell} w-[102px]`}>0</div>
      <div className={`${cell} w-[42px] gap-1`}>
        <Icon name="disc" />
        <input type="checkbox" aria-label="Автозапуск" className="size-[13px] appearance-none border border-[#4c6676] bg-white" />
      </div>
      <div className={`${cell} w-8`} />
      <div className={`${cell} w-8`} />
      <div className={`${cell} w-[171px]`}>В. 2.33 от 12.09.2017</div>
    </footer>
  );
}

export default function App() {
  return (
    <div className={`flex h-screen flex-col overflow-hidden bg-[#708896] text-[11px] leading-4 text-black ${uiFont}`}>
      <Gradients />
      <TitleBar />
      <MainToolbar />
      <main className="flex min-h-0 flex-1 pt-[2px] pl-[2px]">
        <TreePane />
        <div className="w-1 shrink-0" />
        <ListPane />
        <div className="w-[2px] shrink-0" />
        <SidePane />
      </main>
      <StatusBar />
    </div>
  );
}
